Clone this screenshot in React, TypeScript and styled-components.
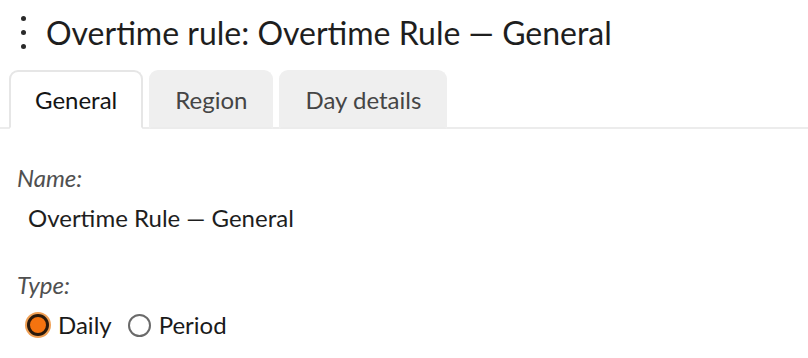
import React, { useState } from 'react';
import styled, { createGlobalStyle } from 'styled-components';

const GlobalStyle = createGlobalStyle`
  html, body {
    margin: 0;
    padding: 0;
    background: #ffffff;
    font-family: Lato, 'Open Sans', sans-serif;
    color: #1a1a1a;
  }
`;

const Page = styled.div`
  width: 808px;
  height: 358px;
  overflow: hidden;
`;

const Header = styled.div`
  display: flex;
  align-items: center;
  height: 64px;
  padding: 0 0 0 13px;
  gap: 13px;
`;

const MenuButton = styled.button`
  display: flex;
  flex-direction: column;
  justify-content: center;
  align-items: center;
  gap: 9px;
  width: 20px;
  height: 40px;
  padding: 0;
  border: none;
  background: none;
  cursor: pointer;
`;

const Dot = styled.span`
  width: 5px;
  height: 5px;
  border-radius: 50%;
  background: #2a2a2a;
`;

const Title = styled.h1`
  margin: 0;
  font-size: 32px;
  font-weight: 400;
  color: #1e1e1e;
`;

const TabBar = styled.div`
  display: flex;
  gap: 6px;
  padding: 6px 0 0 9px;
  border-bottom: 2px solid #ececec;
`;

const Tab = styled.button<{ opened: boolean }>`
  height: 59px;
  padding: 0 24px;
  margin-bottom: -2px;
  border: 2px solid ${p => (p.opened ? '#e6e6e6' : '#efefef')};
  border-bottom: ${p => (p.opened ? '2px solid #ffffff' : '2px solid #ececec')};
  border-radius: 9px 9px 0 0;
  background: ${p => (p.opened ? '#ffffff' : '#efefef')};
  color: ${p => (p.opened ? '#141414' : '#454545')};
  font-family: Lato, sans-serif;
  font-size: 24px;
  cursor: pointer;
  outline: none;
`;

const Form = styled.div`
  display: flex;
  flex-direction: column;
  padding: 34px 0 0 17px;
`;

const Label = styled.div`
  font-size: 24px;
  font-style: italic;
  color: #505050;
  line-height: 30px;
`;

const Value = styled.div`
  padding: 10px 0 0 11px;
  font-size: 24px;
  color: #1e1e1e;
  line-height: 30px;
  margin-bottom: 37px;
`;

const RadioRow = styled.div`
  display: flex;
  align-items: center;
  gap: 16px;
  padding: 11px 0 0 9px;
`;

const RadioLabel = styled.label`
  display: flex;
  align-items: center;
  gap: 8px;
  font-size: 24px;
  line-height: 28px;
  color: #1a1a1a;
  cursor: pointer;
`;

const RadioCircle = styled.span<{ checked: boolean }>`
  box-sizing: border-box;
  width: ${p => (p.checked ? '22px' : '23px')};
  height: ${p => (p.checked ? '22px' : '23px')};
  margin: ${p => (p.checked ? '0 1px' : '0')};
  border-radius: 50%;
  border: ${p => (p.checked ? '3px solid #2b1a0c' : '2px solid #6a6a6a')};
  background: ${p => (p.checked ? '#f5730f' : '#ffffff')};
  box-shadow: ${p => (p.checked ? '0 0 0 2px #f0a055' : 'none')};
`;

const tabs = ['General', 'Region', 'Day details'];

const App: React.FC = () => {
  const [currentTab, changeTab] = useState(0);
  const [type, setType] = useState('Daily');

  return (
    <Page>
      <GlobalStyle />
      <Header>
        <MenuButton aria-label="menu">
          <Dot />
          <Dot />
          <Dot />
        </MenuButton>
        <Title>Overtime rule: Overtime Rule — General</Title>
      </Header>
      <TabBar>
        {tabs.map((t, i) => (
          <Tab key={t} opened={currentTab === i} onClick={() => changeTab(i)}>
            {t}
          </Tab>
        ))}
      </TabBar>
      <Form>
        <Label>Name:</Label>
        <Value>Overtime Rule — General</Value>
        <Label>Type:</Label>
        <RadioRow>
          {['Daily', 'Period'].map(o => (
            <RadioLabel key={o} onClick={() => setType(o)}>
              <RadioCircle checked={type === o} />
              {o}
            </RadioLabel>
          ))}
        </RadioRow>
      </Form>
    </Page>
  );
};

export default App;
